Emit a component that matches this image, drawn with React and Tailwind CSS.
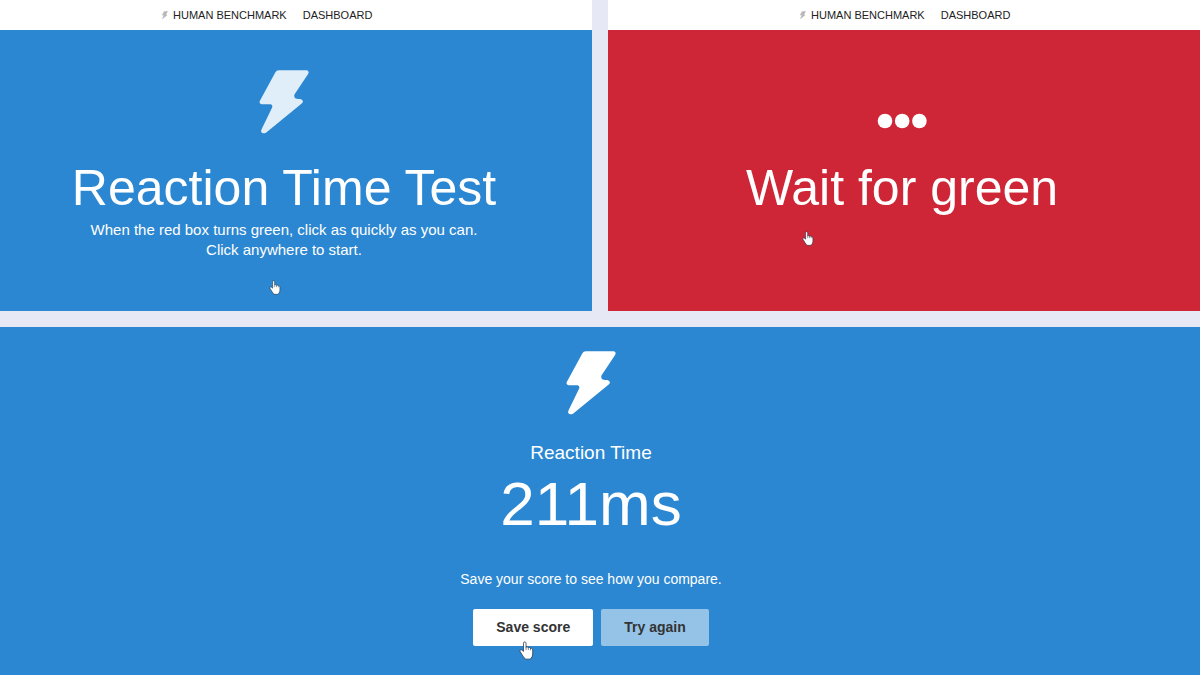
const BOLT =
  "M58 1H140Q150 2 145 12L105 72Q102 79 107 84Q109 86 122 86Q134 89 127 99L20 186Q10 191 6 184Q5 181 7 176L38 112Q41 104 34 102H7Q-2 100 2 91L48 7Q51 1 58 1Z";

function Bolt({ className }) {
  return (
    <svg viewBox="0 0 147 190" className={className} fill="currentColor" aria-hidden="true">
      <path d={BOLT} />
    </svg>
  );
}

function Dots() {
  return (
    <svg viewBox="0 0 50 64" className="h-16 w-[50px]" fill="currentColor" aria-hidden="true">
      <circle cx="8" cy="51" r="7.3" />
      <circle cx="25.2" cy="51" r="7.3" />
      <circle cx="42.4" cy="51" r="7.3" />
    </svg>
  );
}

function Hand({ className }) {
  return (
    <svg viewBox="0 0 17 22" className={className} aria-hidden="true">
      <path
        d="M5 12V2.5Q5 1 6.4 1T8 2.5V7.5Q8.2 6.6 9.3 6.7T10.6 8Q11 7.2 12 7.4T13.2 8.8Q13.6 8.2 14.5 8.5T15.7 10.2V15Q15.7 18 14 19.5L13 21H7L6 19.5Q4 17.5 3 15.2L1 12Q.6 10.6 1.8 10.2T4 11.2Z"
        fill="#fff"
        stroke="#26364a"
        strokeWidth="0.9"
        strokeLinejoin="round"
      />
      <path d="M8 7.5V10.5M10.6 8V10.5M13.2 8.8V10.8" fill="none" stroke="#26364a" strokeWidth="0.7" />
    </svg>
  );
}

function Nav({ className }) {
  return (
    <nav className={`flex h-[30px] items-center bg-white text-[11px] text-[#222] ${className}`}>
      <a href="#home" className="flex items-center gap-[5px]">
        <Bolt className="h-2 w-1.5 text-[#b8b8b8]" />
        HUMAN BENCHMARK
      </a>
      <a href="#dashboard" className="ml-4">
        DASHBOARD
      </a>
    </nav>
  );
}

export default function App() {
  return (
    <main className="flex min-h-screen flex-col gap-4 bg-[#e6e8f5] font-['Liberation_Sans',Arial,sans-serif] text-white">
      <div className="grid grid-cols-2 gap-4">
        <div className="flex flex-col">
          <Nav className="pl-[162px]" />
          <section className="relative flex grow flex-col items-center bg-[#2b87d1] pt-10 pr-6 pb-[51px] text-center">
            <Bolt className="h-16 w-[50px] text-[#e0eef9]" />
            <h1 className="mt-6 text-[50px] leading-[60px]">Reaction Time Test</h1>
            <p className="mt-0.5 text-[15px] leading-5">
              When the red box turns green, click as quickly as you can.
              <br />
              Click anywhere to start.
            </p>
            <Hand className="absolute top-[250px] left-[269px] h-[15px] w-3" />
          </section>
        </div>
        <div className="flex flex-col">
          <Nav className="pl-48" />
          <section className="relative flex grow flex-col items-center bg-[#ce2636] pt-10 pr-1 text-center">
            <Dots />
            <h2 className="mt-6 text-[50px] leading-[60px]">Wait for green</h2>
            <Hand className="absolute top-[201px] left-[194px] h-[15px] w-3" />
          </section>
        </div>
      </div>
      <section className="flex grow flex-col items-center bg-[#2b87d1] pt-6 pr-[18px] pb-7 text-center">
        <Bolt className="h-16 w-[50px]" />
        <h2 className="mt-[26px] text-[19px] leading-6">Reaction Time</h2>
        <p className="mt-1 text-[62px] leading-[70px]">211ms</p>
        <p className="mt-[30px] text-[14px] leading-5">Save your score to see how you compare.</p>
        <div className="mt-5 flex gap-2 text-[14px] font-bold text-[#333]">
          <button type="button" className="relative h-[37px] rounded-xs bg-white px-[23px]">
            Save score
            <Hand className="absolute top-8 left-[46px] h-[19px] w-[15px]" />
          </button>
          <button type="button" className="h-[37px] rounded-xs bg-[#95c3e8] px-[23px]">
            Try again
          </button>
        </div>
      </section>
    </main>
  );
}
